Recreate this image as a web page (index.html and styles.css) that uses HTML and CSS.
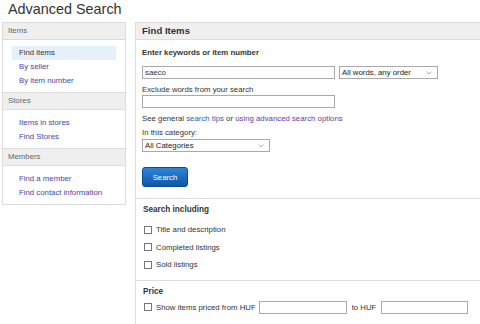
FILE: index.html
```
<!DOCTYPE html>
<html>
<head>
    <link rel="stylesheet" href="styles.css">
</head>
<body>
    <h1 class="page-title">Advanced Search</h1>
    <div class="layout">
        <div class="sidebar">
            <div class="side-head">Items</div>
            <ul class="side-list">
                <li class="active">Find items</li>
                <li><a href="#">By seller</a></li>
                <li><a href="#">By item number</a></li>
            </ul>
            <div class="side-head">Stores</div>
            <ul class="side-list">
                <li><a href="#">Items in stores</a></li>
                <li><a href="#">Find Stores</a></li>
            </ul>
            <div class="side-head">Members</div>
            <ul class="side-list">
                <li><a href="#">Find a member</a></li>
                <li><a href="#">Find contact information</a></li>
            </ul>
        </div>

        <div class="main">
            <div class="main-head">Find Items</div>

            <div class="section first">
                <div class="label-bold">Enter keywords or item number</div>
                <div class="kw-row">
                    <input class="text-input wide" type="text" value="saeco">
                    <div class="select order">
                        <span>All words, any order</span>
                        <svg width="6" height="4" viewBox="0 0 6 4"><path d="M0.5 0.5 L3 3 L5.5 0.5" fill="none" stroke="#999" stroke-width="0.8"/></svg>
                    </div>
                </div>
                <div class="label exclude">Exclude words from your search</div>
                <input class="text-input wide" type="text">
                <p class="tips">See general <a href="#" class="blue">search tips</a> or <a href="#" class="visited">using advanced search options</a></p>
                <div class="label cat">In this category:</div>
                <div class="select category">
                    <span>All Categories</span>
                    <svg width="6" height="4" viewBox="0 0 6 4"><path d="M0.5 0.5 L3 3 L5.5 0.5" fill="none" stroke="#999" stroke-width="0.8"/></svg>
                </div>
                <button class="search-btn">Search</button>
            </div>

            <div class="section checks">
                <div class="label-bold sec-title">Search including</div>
                <label class="check-row"><input type="checkbox"> Title and description</label>
                <label class="check-row"><input type="checkbox"> Completed listings</label>
                <label class="check-row"><input type="checkbox"> Sold listings</label>
            </div>

            <div class="section last">
                <div class="label-bold sec-title">Price</div>
                <div class="price-row">
                    <label class="check-inline"><input type="checkbox"> Show items priced from HUF</label>
                    <input class="text-input price" type="text">
                    <span class="to">to HUF</span>
                    <input class="text-input price" type="text">
                </div>
            </div>
        </div>
    </div>
</body>
</html>
```

FILE: styles.css
```
body {
    font-family: "Liberation Sans", Arial, sans-serif;
    font-size: 7.8px;
    color: #333;
    background: #fff;
    margin: 0;
    overflow: hidden;
}
a {
    text-decoration: none;
}
.page-title {
    font-size: 14.4px;
    font-weight: normal;
    color: #333;
    line-height: 18px;
    margin: 0 0 4px 0;
    padding-left: 8px;
}
.layout {
    display: flex;
    align-items: flex-start;
}
.sidebar {
    width: 122px;
    margin-left: 2px;
    border: 1px solid #dcdcdc;
}
.side-head {
    background: #efefef;
    color: #666;
    height: 16px;
    line-height: 16px;
    padding-left: 5px;
    border-bottom: 1px solid #dcdcdc;
}
.side-list + .side-head {
    border-top: 1px solid #dcdcdc;
}
.side-list {
    list-style: none;
    margin: 0;
    padding: 6px 9px 4px 9px;
}
.side-list li {
    height: 14px;
    line-height: 14px;
    padding-left: 7px;
}
.side-list li.active {
    background: #e6f0fa;
    color: #333;
}
.side-list a {
    color: #4646a6;
}
.main {
    flex: 1;
    margin-left: 9px;
    margin-right: -10px;
    border: 1px solid #dcdcdc;
    border-bottom: none;
    min-height: 310px;
}
.main-head {
    background: #efefef;
    height: 16px;
    line-height: 16px;
    font-size: 9.6px;
    font-weight: bold;
    padding-left: 6px;
    border-bottom: 1px solid #dcdcdc;
}
.section {
    padding: 6px 6px 11px 6px;
    border-bottom: 1px solid #dcdcdc;
}
.section.first {
    padding-top: 7px;
}
.section.checks {
    padding-bottom: 6px;
}
.section.last {
    border-bottom: none;
}
.label-bold {
    font-weight: bold;
    line-height: 12px;
}
.label {
    line-height: 11px;
}
.kw-row {
    display: flex;
    gap: 4px;
    margin-top: 7px;
}
.text-input {
    box-sizing: border-box;
    height: 13px;
    border: 1px solid #a9a9a9;
    padding: 0 2px;
    font-family: inherit;
    font-size: 7.8px;
    color: #333;
    margin: 0;
    outline: none;
    display: block;
}
.wide {
    width: 193px;
}
.select {
    box-sizing: border-box;
    height: 13px;
    border: 1px solid #a9a9a9;
    padding: 0 5px 0 2px;
    display: flex;
    align-items: center;
    justify-content: space-between;
    color: #222;
}
.order {
    width: 99px;
}
.category {
    width: 128px;
}
.exclude {
    margin-top: 5px;
}
.tips {
    margin: 5px 0 0 0;
    line-height: 12px;
}
.blue {
    color: #1f5fb8;
}
.visited {
    color: #6a3d9e;
}
.cat {
    margin-top: 2px;
    line-height: 12px;
}
.search-btn {
    display: block;
    margin-top: 15px;
    width: 46px;
    height: 20px;
    border: 1px solid #0c4b92;
    border-radius: 3px;
    background: linear-gradient(180deg, #2f84d6 0%, #0d58aa 100%);
    color: #fff;
    font-family: inherit;
    font-size: 7.8px;
    padding: 0;
}
.sec-title {
    font-size: 8.2px;
    margin-top: -1px;
    padding-left: 1px;
}
.check-row {
    display: flex;
    align-items: center;
    height: 17.5px;
    padding-left: 2px;
}
.check-row:first-of-type {
    margin-top: 5px;
}
input[type="checkbox"] {
    appearance: none;
    -webkit-appearance: none;
    width: 8px;
    height: 8px;
    border: 1px solid #777;
    background: #fff;
    margin: 0 4px 0 0;
    box-sizing: border-box;
}
.check-inline {
    display: flex;
    align-items: center;
    padding-left: 2px;
}
.price-row {
    display: flex;
    align-items: center;
    margin-top: 3px;
}
.price {
    width: 88px;
    margin-left: 3px;
}
.to {
    margin-left: 5px;
}
.price-row .price:last-child {
    width: 87px;
    margin-left: 5px;
}
```
